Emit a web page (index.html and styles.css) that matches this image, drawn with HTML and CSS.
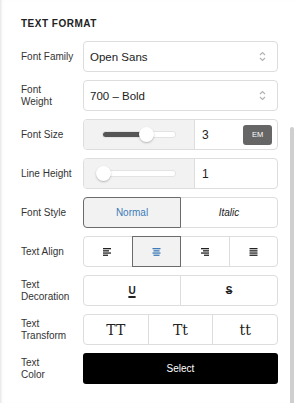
FILE: index.html
```html
<!DOCTYPE html>
<html lang="en">
<head>
    <meta charset="UTF-8">
    <meta name="viewport" content="width=device-width, initial-scale=1.0">
    <title>Text Format</title>
    <link rel="stylesheet" href="styles.css">
</head>
<body>

<div class="panel">
    <h2 class="title">Text Format</h2>

    <div class="rows">
        <div class="row">
            <label class="label">Font Family</label>
            <div class="select">
                <span>Open Sans</span>
                <svg class="chevrons" width="7" height="11" viewBox="0 0 7 11"><path d="M1 4 L3.5 1.5 L6 4 M1 7 L3.5 9.5 L6 7" fill="none" stroke="#b3b3b3" stroke-width="1.2"/></svg>
            </div>
        </div>

        <div class="row">
            <label class="label">Font<br>Weight</label>
            <div class="select">
                <span>700 – Bold</span>
                <svg class="chevrons" width="7" height="11" viewBox="0 0 7 11"><path d="M1 4 L3.5 1.5 L6 4 M1 7 L3.5 9.5 L6 7" fill="none" stroke="#b3b3b3" stroke-width="1.2"/></svg>
            </div>
        </div>

        <div class="row">
            <label class="label">Font Size</label>
            <div class="range-box">
                <div class="slider">
                    <div class="track">
                        <div class="fill" style="width: 60%"></div>
                        <div class="thumb" style="left: 60%"></div>
                    </div>
                </div>
                <div class="value">
                    <span>3</span>
                    <button class="unit">EM</button>
                </div>
            </div>
        </div>

        <div class="row">
            <label class="label">Line Height</label>
            <div class="range-box">
                <div class="slider">
                    <div class="track">
                        <div class="fill" style="width: 0%"></div>
                        <div class="thumb" style="left: 0%"></div>
                    </div>
                </div>
                <div class="value">
                    <span>1</span>
                </div>
            </div>
        </div>

        <div class="row">
            <label class="label">Font Style</label>
            <div class="seg">
                <div class="cell active">Normal</div>
                <div class="cell italic">Italic</div>
            </div>
        </div>

        <div class="row">
            <label class="label">Text Align</label>
            <div class="seg">
                <div class="cell">
                    <svg width="9" height="8" viewBox="0 0 9 8"><g fill="currentColor"><rect x="0" y="0" width="8" height="1.3"/><rect x="0" y="2.2" width="6" height="1.3"/><rect x="0" y="4.4" width="8" height="1.3"/><rect x="0" y="6.6" width="5" height="1.3"/></g></svg>
                </div>
                <div class="cell active">
                    <svg width="9" height="8" viewBox="0 0 9 8"><g fill="currentColor"><rect x="0.5" y="0" width="8" height="1.3"/><rect x="1.5" y="2.2" width="6" height="1.3"/><rect x="0.5" y="4.4" width="8" height="1.3"/><rect x="1.5" y="6.6" width="6" height="1.3"/></g></svg>
                </div>
                <div class="cell">
                    <svg width="9" height="8" viewBox="0 0 9 8"><g fill="currentColor"><rect x="1" y="0" width="8" height="1.3"/><rect x="3" y="2.2" width="6" height="1.3"/><rect x="1" y="4.4" width="8" height="1.3"/><rect x="4" y="6.6" width="5" height="1.3"/></g></svg>
                </div>
                <div class="cell">
                    <svg width="9" height="8" viewBox="0 0 9 8"><g fill="currentColor"><rect x="0.5" y="0" width="8" height="1.3"/><rect x="0.5" y="2.2" width="8" height="1.3"/><rect x="0.5" y="4.4" width="8" height="1.3"/><rect x="0.5" y="6.6" width="8" height="1.3"/></g></svg>
                </div>
            </div>
        </div>

        <div class="row">
            <label class="label">Text<br>Decoration</label>
            <div class="seg">
                <div class="cell deco"><span class="underline">U</span></div>
                <div class="cell deco"><span class="strike">S</span></div>
            </div>
        </div>

        <div class="row">
            <label class="label">Text<br>Transform</label>
            <div class="seg">
                <div class="cell serif">TT</div>
                <div class="cell serif">Tt</div>
                <div class="cell serif">tt</div>
            </div>
        </div>

        <div class="row">
            <label class="label">Text<br>Color</label>
            <button class="color-btn">Select</button>
        </div>
    </div>
</div>

<div class="scrollbar"></div>

</body>
</html>
```

FILE: styles.css
```css
/* Panel de formato de texto */
body { margin: 0; padding: 0; font-family: 'Liberation Sans', Arial, sans-serif; background-color: #fff; color: #333; box-shadow: inset 3px 0 3px -2px rgba(0, 0, 0, 0.12); min-height: 403px; overflow: hidden; }
.panel { padding: 18px 18px 0 21px; }
.title { margin: 0 0 11px 0; font-size: 10px; line-height: 12px; font-weight: bold; letter-spacing: 0.5px; text-transform: uppercase; color: #222; }
.rows { display: flex; flex-direction: column; gap: 8px; }
.row { display: grid; grid-template-columns: 62px 1fr; align-items: center; height: 31px; }
.label { font-size: 10px; line-height: 12px; color: #333; padding-right: 4px; }

.select { display: flex; align-items: center; justify-content: space-between; height: 31px; box-sizing: border-box; border: 1px solid #ddd; border-radius: 4px; padding: 0 11px 0 6px; font-size: 11.5px; color: #222; }
.chevrons { display: block; }

.range-box { display: flex; height: 31px; box-sizing: border-box; border: 1px solid #ddd; border-radius: 4px; overflow: hidden; }
.slider { width: 111px; background-color: #f2f2f2; border-right: 1px solid #ddd; display: flex; align-items: center; padding: 0 18px; box-sizing: border-box; }
.track { position: relative; flex: 1; height: 5px; background-color: #fff; border: 1px solid #e3e3e3; border-radius: 3px; }
.fill { height: 100%; background-color: #555; border-radius: 3px; }
.thumb { position: absolute; top: 50%; width: 15px; height: 15px; margin: -7.5px 0 0 -7.5px; background-color: #fff; border-radius: 50%; box-shadow: 0 1px 2px rgba(0, 0, 0, 0.25); }
.value { flex: 1; display: flex; align-items: center; justify-content: space-between; padding: 0 5px 0 7px; font-size: 12px; color: #222; }
.unit { width: 29px; height: 20px; padding: 0; border: none; border-radius: 3px; background-color: #666; color: #fff; font-family: inherit; font-size: 7.5px; }

.seg { display: flex; height: 31px; }
.cell { flex: 1; display: flex; align-items: center; justify-content: center; border: 1px solid #ddd; margin-left: -1px; font-size: 10px; color: #222; box-sizing: border-box; }
.cell:first-child { margin-left: 0; border-radius: 4px 0 0 4px; }
.cell:last-child { border-radius: 0 4px 4px 0; }
.cell.active { position: relative; z-index: 1; border-color: #6b6b6b; background-color: #f2f2f2; color: #3d7bb9; }
.cell svg { display: block; }
.italic { font-style: italic; }
.deco { font-size: 10px; font-weight: bold; }
.underline { text-decoration: underline; text-decoration-thickness: 1.5px; text-underline-offset: 2px; }
.strike { text-decoration: line-through; text-decoration-thickness: 1.3px; }
.serif { font-family: 'DejaVu Serif', serif; font-size: 14px; font-weight: normal; color: #222; }

.color-btn { height: 31px; border: none; border-radius: 3px; background-color: #000; color: #fff; font-family: inherit; font-size: 10px; }

.scrollbar { position: absolute; top: 127px; right: 2px; width: 4px; height: 290px; background-color: #cfcfcf; border-radius: 2px; }
```
